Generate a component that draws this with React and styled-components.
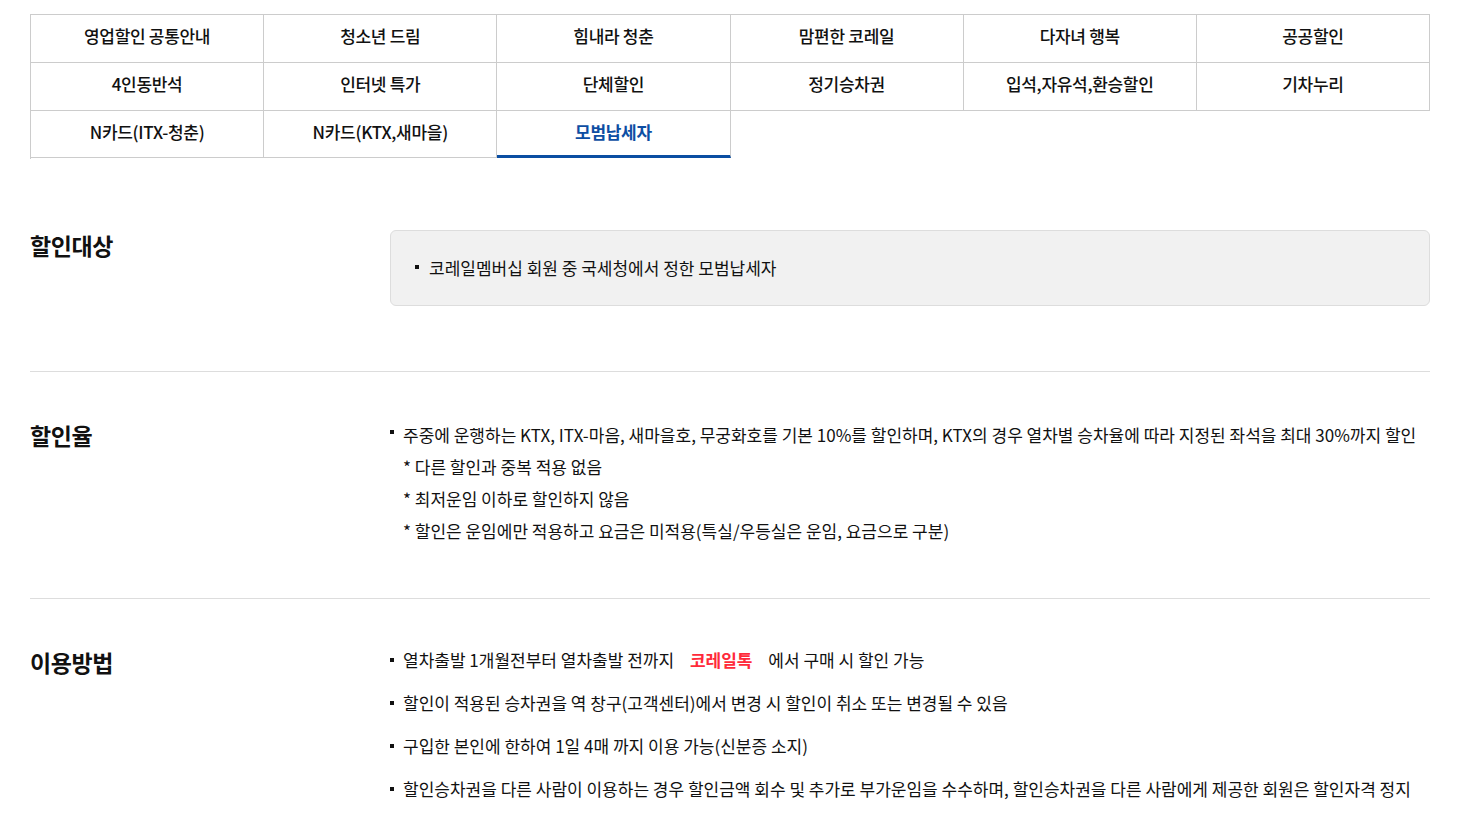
import styled, { createGlobalStyle } from "styled-components"

const GlobalStyle = createGlobalStyle`
    * { box-sizing: border-box; }
    body {
        margin: 0;
        background: #fff;
        color: #111;
        font-family: "Noto Sans CJK KR", "Noto Sans", sans-serif;
    }
`

const Page = styled.div`
    width: 1400px;
    margin: 14px 0 0 30px;
`
const TabGrid = styled.ul`
    list-style: none;
    margin: 0;
    padding: 0;
    display: grid;
    grid-template-columns: repeat(6, 1fr);
    grid-auto-rows: 48px;
    border-top: 1px solid #ccc;
    border-left: 1px solid #ccc;
`
const Tab = styled.li`
    display: flex;
    align-items: center;
    justify-content: center;
    padding-bottom: ${p => (p.$active ? "4px" : "6px")};
    border-right: 1px solid #ccc;
    border-bottom: ${p => (p.$active ? "3px solid #0b4ea2" : "1px solid #ccc")};
    font-size: 17px;
    font-weight: ${p => (p.$active ? 700 : 500)};
    color: ${p => (p.$active ? "#0d4ea3" : "#111")};
    letter-spacing: -0.3px;
    cursor: pointer;

    &:nth-child(n + 13) {
        height: 47px;
    }
`
const Section = styled.section`
    display: grid;
    grid-template-columns: 360px 1fr;
    padding: ${p => p.$pad};
    border-bottom: ${p => (p.$last ? "none" : "1px solid #ddd")};
`
const Heading = styled.h3`
    margin: ${p => p.$mt || "0"} 0 0;
    font-size: 23px;
    font-weight: 700;
    line-height: 32px;
    letter-spacing: -0.4px;
    color: #111;
`
const InfoBox = styled.div`
    background: #f1f1f1;
    border: 1px solid #ddd;
    border-radius: 6px;
    padding: 23px 24px;
`
const List = styled.ul`
    list-style: none;
    margin: 0;
    padding: 0;
    display: flex;
    flex-direction: column;
    gap: ${p => p.$gap || "0"};
`
const Item = styled.li`
    position: relative;
    padding-left: ${p => p.$indent || "13px"};
    font-size: 17px;
    line-height: ${p => p.$lh || "32px"};
    color: #111;
    white-space: nowrap;

    &::before {
        content: "";
        position: absolute;
        left: 0;
        top: ${p => p.$dotTop || "12px"};
        width: 4px;
        height: 4px;
        background: #111;
    }
`
const Note = styled.li`
    padding-left: 13px;
    font-size: 17px;
    line-height: 32px;
    color: #111;
`
const Highlight = styled.strong`
    color: #ff2a3a;
    font-weight: 700;
    margin: 0 12px;
`

const tabs = [
    "영업할인 공통안내", "청소년 드림", "힘내라 청춘", "맘편한 코레일", "다자녀 행복", "공공할인",
    "4인동반석", "인터넷 특가", "단체할인", "정기승차권", "입석,자유석,환승할인", "기차누리",
    "N카드(ITX-청춘)", "N카드(KTX,새마을)", "모범납세자",
]

const App = () => {
    return (
        <>
            <GlobalStyle />
            <Page>
                <TabGrid>
                    {tabs.map((name) => (
                        <Tab key={name} $active={name === "모범납세자"}>{name}</Tab>
                    ))}
                </TabGrid>

                <Section $pad="71px 0 65px">
                    <Heading $mt="-1px">할인대상</Heading>
                    <InfoBox>
                        <List>
                            <Item $indent="14px" $lh="28px" $dotTop="11px">코레일멤버십 회원 중 국세청에서 정한 모범납세자</Item>
                        </List>
                    </InfoBox>
                </Section>

                <Section $pad="47px 0 51px">
                    <Heading>할인율</Heading>
                    <List>
                        <Item $dotTop="11px">주중에 운행하는 KTX, ITX-마음, 새마을호, 무궁화호를 기본 10%를 할인하며, KTX의 경우 열차별 승차율에 따라 지정된 좌석을 최대 30%까지 할인</Item>
                        <Note>* 다른 할인과 중복 적용 없음</Note>
                        <Note>* 최저운임 이하로 할인하지 않음</Note>
                        <Note>* 할인은 운임에만 적용하고 요금은 미적용(특실/우등실은 운임, 요금으로 구분)</Note>
                    </List>
                </Section>

                <Section $pad="45px 0 20px" $last>
                    <Heading $mt="2px">이용방법</Heading>
                    <List $gap="11px">
                        <Item $dotTop="14px">열차출발 1개월전부터 열차출발 전까지 <Highlight>코레일톡</Highlight> 에서 구매 시 할인 가능</Item>
                        <Item $dotTop="14px">할인이 적용된 승차권을 역 창구(고객센터)에서 변경 시 할인이 취소 또는 변경될 수 있음</Item>
                        <Item $dotTop="14px">구입한 본인에 한하여 1일 4매 까지 이용 가능(신분증 소지)</Item>
                        <Item $dotTop="14px">할인승차권을 다른 사람이 이용하는 경우 할인금액 회수 및 추가로 부가운임을 수수하며, 할인승차권을 다른 사람에게 제공한 회원은 할인자격 정지</Item>
                    </List>
                </Section>
            </Page>
        </>
    )
}

export default App
